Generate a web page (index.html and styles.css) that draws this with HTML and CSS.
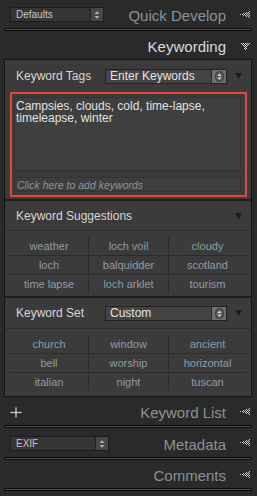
FILE: index.html
```html
<!DOCTYPE html>
<html>
<head>
<meta charset="utf-8">
<link rel="stylesheet" href="styles.css">
</head>
<body>
<div class="app">
  <div class="hdr">
    <div class="sel sel-defaults"><span class="sel-text">Defaults</span><span class="step"><svg width="13" height="13" viewBox="0 0 13 13"><polygon points="4,6 6.5,3 9,6" fill="#b4b4b4"/><polygon points="4,8 6.5,11 9,8" fill="#b4b4b4"/></svg></span></div>
    <div class="title">Quick Develop</div>
    <svg class="arrow" width="10" height="7" viewBox="0 0 10 7" fill="#c8c8c8"><rect x="9" y="0" width="1" height="1"/><rect x="6" y="1" width="1" height="1"/><rect x="8" y="1" width="1" height="1"/><rect x="3" y="2" width="1" height="1"/><rect x="5" y="2" width="1" height="1"/><rect x="7" y="2" width="1" height="1"/><rect x="9" y="2" width="1" height="1"/><rect x="0" y="3" width="1" height="1"/><rect x="2" y="3" width="1" height="1"/><rect x="4" y="3" width="1" height="1"/><rect x="6" y="3" width="1" height="1"/><rect x="8" y="3" width="1" height="1"/><rect x="3" y="4" width="1" height="1"/><rect x="5" y="4" width="1" height="1"/><rect x="7" y="4" width="1" height="1"/><rect x="9" y="4" width="1" height="1"/><rect x="6" y="5" width="1" height="1"/><rect x="8" y="5" width="1" height="1"/><rect x="9" y="6" width="1" height="1"/></svg>
  </div>
  <div class="divider"></div>

  <div class="hdr open">
    <div class="title">Keywording</div>
    <svg class="arrow down" width="9" height="7" viewBox="0 0 9 7" fill="#dcdcdc"><rect x="0" y="0" width="1" height="1"/><rect x="2" y="0" width="1" height="1"/><rect x="4" y="0" width="1" height="1"/><rect x="6" y="0" width="1" height="1"/><rect x="8" y="0" width="1" height="1"/><rect x="1" y="1" width="1" height="1"/><rect x="3" y="1" width="1" height="1"/><rect x="5" y="1" width="1" height="1"/><rect x="7" y="1" width="1" height="1"/><rect x="2" y="2" width="1" height="1"/><rect x="4" y="2" width="1" height="1"/><rect x="6" y="2" width="1" height="1"/><rect x="3" y="3" width="1" height="1"/><rect x="5" y="3" width="1" height="1"/><rect x="4" y="4" width="1" height="1"/><rect x="3" y="5" width="1" height="1"/><rect x="5" y="5" width="1" height="1"/><rect x="4" y="6" width="1" height="1"/></svg>
  </div>

  <div class="panel">
    <div class="prow">
      <span class="lbl">Keyword Tags</span>
      <div class="sel sel-panel"><span class="sel-text">Enter Keywords</span><span class="step step-panel"><svg width="13" height="13" viewBox="0 0 13 13"><rect x="2.5" y="1.5" width="8" height="10" rx="4" fill="#5a5a5a" stroke="#3a3a3a"/><polygon points="4.5,6 6.5,3.5 8.5,6" fill="#dedede"/><polygon points="4.5,7.5 6.5,10 8.5,7.5" fill="#dedede"/></svg></span></div>
      <svg class="ptri" width="7" height="6" viewBox="0 0 7 6"><polygon points="0,0 7,0 3.5,6" fill="#1c1c1c"/></svg>
    </div>

    <div class="redbox">
      <div class="tags">Campsies, clouds, cold, time-lapse, timeleapse, winter</div>
      <div class="addkw">Click here to add keywords</div>
    </div>

    <div class="sep"></div>

    <div class="shdr">
      <span class="lbl">Keyword Suggestions</span>
      <svg class="ptri" width="7" height="6" viewBox="0 0 7 6"><polygon points="0,0 7,0 3.5,6" fill="#1c1c1c"/></svg>
    </div>

    <div class="grid">
      <div class="cell">weather</div><div class="cell">loch voil</div><div class="cell">cloudy</div>
      <div class="cell">loch</div><div class="cell">balquidder</div><div class="cell">scotland</div>
      <div class="cell">time lapse</div><div class="cell">loch arklet</div><div class="cell">tourism</div>
    </div>

    <div class="sep sep-b"></div>

    <div class="prow kset">
      <span class="lbl">Keyword Set</span>
      <div class="sel sel-panel"><span class="sel-text">Custom</span><span class="step step-panel"><svg width="13" height="13" viewBox="0 0 13 13"><rect x="2.5" y="1.5" width="8" height="10" rx="4" fill="#5a5a5a" stroke="#3a3a3a"/><polygon points="4.5,6 6.5,3.5 8.5,6" fill="#dedede"/><polygon points="4.5,7.5 6.5,10 8.5,7.5" fill="#dedede"/></svg></span></div>
      <svg class="ptri" width="7" height="6" viewBox="0 0 7 6"><polygon points="0,0 7,0 3.5,6" fill="#1c1c1c"/></svg>
    </div>

    <div class="grid grid-b">
      <div class="cell">church</div><div class="cell">window</div><div class="cell">ancient</div>
      <div class="cell">bell</div><div class="cell">worship</div><div class="cell">horizontal</div>
      <div class="cell">italian</div><div class="cell">night</div><div class="cell">tuscan</div>
    </div>
  </div>

  <div class="hdr">
    <svg class="plus" width="12" height="11" viewBox="0 0 12 11"><path d="M5 0h2v4.5h5v2H7V11H5V6.5H0v-2h5z" fill="#c4c8cc" stroke="#1a1a1a" stroke-width="0.6"/></svg>
    <div class="title">Keyword List</div>
    <svg class="arrow" width="10" height="7" viewBox="0 0 10 7" fill="#c8c8c8"><rect x="9" y="0" width="1" height="1"/><rect x="6" y="1" width="1" height="1"/><rect x="8" y="1" width="1" height="1"/><rect x="3" y="2" width="1" height="1"/><rect x="5" y="2" width="1" height="1"/><rect x="7" y="2" width="1" height="1"/><rect x="9" y="2" width="1" height="1"/><rect x="0" y="3" width="1" height="1"/><rect x="2" y="3" width="1" height="1"/><rect x="4" y="3" width="1" height="1"/><rect x="6" y="3" width="1" height="1"/><rect x="8" y="3" width="1" height="1"/><rect x="3" y="4" width="1" height="1"/><rect x="5" y="4" width="1" height="1"/><rect x="7" y="4" width="1" height="1"/><rect x="9" y="4" width="1" height="1"/><rect x="6" y="5" width="1" height="1"/><rect x="8" y="5" width="1" height="1"/><rect x="9" y="6" width="1" height="1"/></svg>
  </div>
  <div class="divider"></div>

  <div class="hdr hdr-meta">
    <div class="sel sel-exif"><span class="sel-text">EXIF</span><span class="step"><svg width="13" height="13" viewBox="0 0 13 13"><polygon points="4,6 6.5,3 9,6" fill="#b4b4b4"/><polygon points="4,8 6.5,11 9,8" fill="#b4b4b4"/></svg></span></div>
    <div class="title">Metadata</div>
    <svg class="arrow" width="10" height="7" viewBox="0 0 10 7" fill="#c8c8c8"><rect x="9" y="0" width="1" height="1"/><rect x="6" y="1" width="1" height="1"/><rect x="8" y="1" width="1" height="1"/><rect x="3" y="2" width="1" height="1"/><rect x="5" y="2" width="1" height="1"/><rect x="7" y="2" width="1" height="1"/><rect x="9" y="2" width="1" height="1"/><rect x="0" y="3" width="1" height="1"/><rect x="2" y="3" width="1" height="1"/><rect x="4" y="3" width="1" height="1"/><rect x="6" y="3" width="1" height="1"/><rect x="8" y="3" width="1" height="1"/><rect x="3" y="4" width="1" height="1"/><rect x="5" y="4" width="1" height="1"/><rect x="7" y="4" width="1" height="1"/><rect x="9" y="4" width="1" height="1"/><rect x="6" y="5" width="1" height="1"/><rect x="8" y="5" width="1" height="1"/><rect x="9" y="6" width="1" height="1"/></svg>
  </div>
  <div class="divider"></div>

  <div class="hdr">
    <div class="title">Comments</div>
    <svg class="arrow" width="10" height="7" viewBox="0 0 10 7" fill="#c8c8c8"><rect x="9" y="0" width="1" height="1"/><rect x="6" y="1" width="1" height="1"/><rect x="8" y="1" width="1" height="1"/><rect x="3" y="2" width="1" height="1"/><rect x="5" y="2" width="1" height="1"/><rect x="7" y="2" width="1" height="1"/><rect x="9" y="2" width="1" height="1"/><rect x="0" y="3" width="1" height="1"/><rect x="2" y="3" width="1" height="1"/><rect x="4" y="3" width="1" height="1"/><rect x="6" y="3" width="1" height="1"/><rect x="8" y="3" width="1" height="1"/><rect x="3" y="4" width="1" height="1"/><rect x="5" y="4" width="1" height="1"/><rect x="7" y="4" width="1" height="1"/><rect x="9" y="4" width="1" height="1"/><rect x="6" y="5" width="1" height="1"/><rect x="8" y="5" width="1" height="1"/><rect x="9" y="6" width="1" height="1"/></svg>
  </div>
  <div class="divider"></div>
</div>
</body>
</html>
```

FILE: styles.css
```css
* { box-sizing: border-box; }
html, body { margin: 0; padding: 0; }
body {
  background: #2a2a2a;
  width: 257px;
  height: 496px;
  overflow: hidden;
  font-family: "Liberation Sans", Arial, sans-serif;
}
.app { display: flex; flex-direction: column; }

.hdr {
  display: flex;
  align-items: center;
  height: 28px;
  padding: 0 7px 0 10px;
}
.hdr-meta { height: 29px; }
.hdr .title {
  margin-left: auto;
  font-size: 15px;
  color: #8b9198;
  padding-top: 3px;
  white-space: nowrap;
}
.hdr.open .title { color: #dadada; }
.arrow { margin-left: 14px; flex: none; }
.arrow.down { margin-left: 15px; margin-right: 0; position: relative; top: 1px; }
.plus { flex: none; margin-top: 3px; }

.divider {
  height: 3px;
  margin: 0 5px 0 4px;
  border: 1px solid #0c0c0c;
  background: #4c4c4c;
  flex: none;
}

/* selects */
.sel {
  display: flex;
  align-items: stretch;
  height: 15px;
  border: 1px solid #1c1c1c;
  background: #353535;
  flex: none;
}
.sel-text {
  flex: 1;
  display: flex;
  align-items: center;
  padding-left: 5px;
  font-size: 10px;
  color: #c6c6c6;
  white-space: nowrap;
}
.step {
  width: 13px;
  display: flex;
  align-items: center;
  justify-content: center;
  background: #474747;
  border-left: 1px solid #232323;
}
.sel-defaults { width: 94px; }
.sel-exif { width: 99px; margin-top: 1px; }

.sel-panel {
  width: 122px;
  background: #444444;
  border-color: #222;
}
.sel-panel .sel-text { font-size: 12px; color: #e2e2e2; padding-left: 4px; }
.step-panel { width: 15px; background: #707070; border-left-color: #2a2a2a; }

/* panel */
.panel {
  margin: 0 5px 0 4px;
  border: 1px solid #141414;
  background: #3b3b3b;
  display: flex;
  flex-direction: column;
}
.lbl { font-size: 12px; color: #d6d6d6; white-space: nowrap; }
.prow {
  display: flex;
  align-items: center;
  height: 32px;
  padding-left: 11px;
}
.prow .lbl { width: 89px; flex: none; }
.prow .ptri { margin-left: 8px; }
.prow.kset { height: 31px; border-bottom: 1px solid #2e2e2e; }

.redbox {
  margin: 0 4px 0 5px;
  border: 2px solid #e5463c;
  padding: 3px 4px 3px 2px;
  display: flex;
  flex-direction: column;
  gap: 6px;
}
.tags {
  height: 74px;
  border: 1px solid #333;
  background: #3f3f3f;
  padding: 2px 4px 0 1px;
  font-size: 12px;
  line-height: 12px;
  color: #e2e2e2;
}
.addkw {
  height: 15px;
  border: 1px solid #333;
  background: #3e3e3e;
  padding-left: 2px;
  font-size: 10.5px;
  font-style: italic;
  color: #8d949c;
  display: flex;
  align-items: center;
}

.sep { height: 2px; background: #1e1e1e; margin-top: 2px; }
.sep-b { margin-top: 0; }

.shdr {
  display: flex;
  align-items: center;
  justify-content: space-between;
  height: 30px;
  padding: 0 9px 0 11px;
  border-bottom: 1px solid #2e2e2e;
}

.grid {
  display: grid;
  grid-template-columns: 78px 80px 78px;
  grid-auto-rows: 19px;
  margin: 5px 5px 3px 5px;
}
.grid-b { margin-bottom: 5px; }
.cell {
  font-size: 11px;
  color: #8f9ba7;
  display: flex;
  align-items: center;
  justify-content: center;
  white-space: nowrap;
}
.cell:nth-child(3n+2), .cell:nth-child(3n) { border-left: 1px solid #2b2b2b; }
.cell:nth-child(n+4) { border-top: 1px solid #2b2b2b; }
```
